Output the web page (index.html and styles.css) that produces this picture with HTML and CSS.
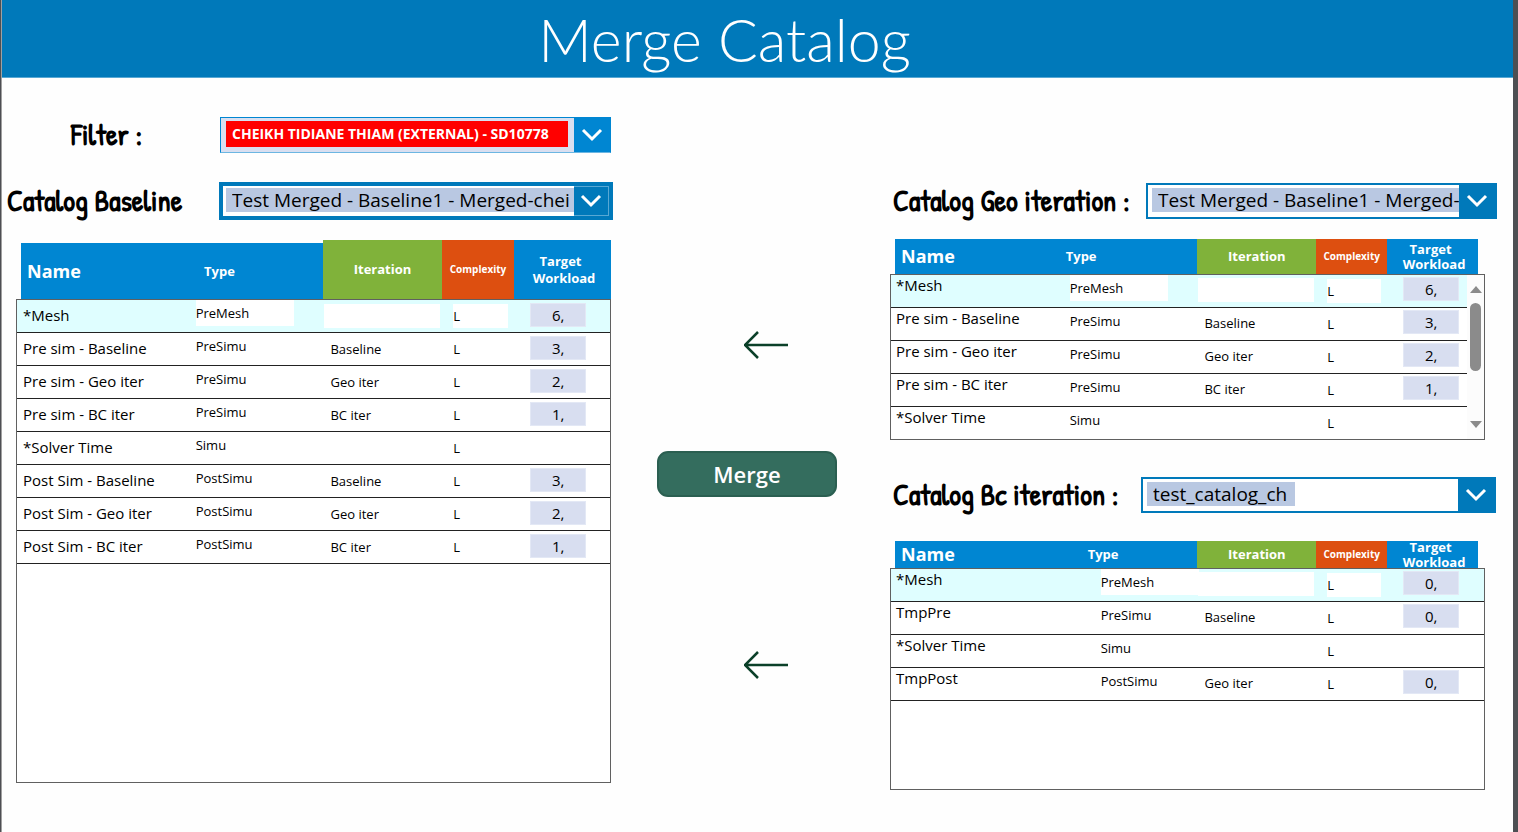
FILE: index.html
```html
<!DOCTYPE html>
<html lang="en">
<head>
<meta charset="utf-8">
<title>Merge Catalog</title>
<link rel="stylesheet" href="styles.css">
</head>
<body>
<div class="screen">
<header class="banner"><h1>Merge Catalog</h1></header>
<main class="content">
  <section class="base">
    <div class="field filter">
      <label for="filter">Filter :</label>
      <div class="combo combo-filter">
        <select id="filter"><option>CHEIKH TIDIANE THIAM (EXTERNAL) - SD10778</option></select>
        <span class="chevron"><svg width="22" height="14" viewBox="0 0 22 14"><path d="M2 2l9 9 9-9"/></svg></span>
      </div>
    </div>
    <div class="field baseline">
      <label for="baseline">Catalog Baseline</label>
      <div class="combo combo-focus">
        <select id="baseline"><option>Test Merged - Baseline1 - Merged-chei</option></select>
        <span class="chevron"><svg width="22" height="14" viewBox="0 0 22 14"><path d="M2 2l9 9 9-9"/></svg></span>
      </div>
    </div>
    <table class="catalog catalog-base">
      <thead><tr><th class="h-name">Name</th><th class="h-type">Type</th><th class="h-iter">Iteration</th><th class="h-cplx">Complexity</th><th class="h-load"><span>Target</span><span>Workload</span></th></tr></thead>
      <tbody>
        <tr class="selected"><td class="name">*Mesh</td><td class="type"><span>PreMesh</span></td><td class="iter"><span></span></td><td class="cplx"><span>L</span></td><td class="load"><input value="6," aria-label="Mesh workload"></td></tr>
        <tr><td class="name">Pre sim - Baseline</td><td class="type"><span>PreSimu</span></td><td class="iter"><span>Baseline</span></td><td class="cplx"><span>L</span></td><td class="load"><input value="3," aria-label="Pre sim Baseline workload"></td></tr>
        <tr><td class="name">Pre sim - Geo iter</td><td class="type"><span>PreSimu</span></td><td class="iter"><span>Geo iter</span></td><td class="cplx"><span>L</span></td><td class="load"><input value="2," aria-label="Pre sim Geo workload"></td></tr>
        <tr><td class="name">Pre sim - BC iter</td><td class="type"><span>PreSimu</span></td><td class="iter"><span>BC iter</span></td><td class="cplx"><span>L</span></td><td class="load"><input value="1," aria-label="Pre sim BC workload"></td></tr>
        <tr><td class="name">*Solver Time</td><td class="type"><span>Simu</span></td><td class="iter"><span></span></td><td class="cplx"><span>L</span></td><td class="load"></td></tr>
        <tr><td class="name">Post Sim - Baseline</td><td class="type"><span>PostSimu</span></td><td class="iter"><span>Baseline</span></td><td class="cplx"><span>L</span></td><td class="load"><input value="3," aria-label="Post Sim Baseline workload"></td></tr>
        <tr><td class="name">Post Sim - Geo iter</td><td class="type"><span>PostSimu</span></td><td class="iter"><span>Geo iter</span></td><td class="cplx"><span>L</span></td><td class="load"><input value="2," aria-label="Post Sim Geo workload"></td></tr>
        <tr><td class="name">Post Sim - BC iter</td><td class="type"><span>PostSimu</span></td><td class="iter"><span>BC iter</span></td><td class="cplx"><span>L</span></td><td class="load"><input value="1," aria-label="Post Sim BC workload"></td></tr>
      </tbody>
    </table>
  </section>

  <section class="actions">
    <svg class="arrow" width="44" height="28" viewBox="0 0 44 28"><path d="M44 14H2M14 1L1 14l13 13"/></svg>
    <button class="merge" type="button">Merge</button>
    <svg class="arrow" width="44" height="28" viewBox="0 0 44 28"><path d="M44 14H2M14 1L1 14l13 13"/></svg>
  </section>

  <section class="iterations">
    <div class="field geo">
      <label for="geo">Catalog Geo iteration :</label>
      <div class="combo">
        <select id="geo"><option>Test Merged - Baseline1 - Merged-chei</option></select>
        <span class="chevron"><svg width="22" height="14" viewBox="0 0 22 14"><path d="M2 2l9 9 9-9"/></svg></span>
      </div>
    </div>
    <div class="scroll-area">
      <table class="catalog catalog-geo">
        <thead><tr><th class="h-name">Name</th><th class="h-type">Type</th><th class="h-iter">Iteration</th><th class="h-cplx">Complexity</th><th class="h-load"><span>Target</span><span>Workload</span></th></tr></thead>
        <tbody>
          <tr class="selected"><td class="name">*Mesh</td><td class="type"><span>PreMesh</span></td><td class="iter"><span></span></td><td class="cplx"><span>L</span></td><td class="load"><input value="6," aria-label="Geo Mesh workload"></td></tr>
          <tr><td class="name">Pre sim - Baseline</td><td class="type"><span>PreSimu</span></td><td class="iter"><span>Baseline</span></td><td class="cplx"><span>L</span></td><td class="load"><input value="3," aria-label="Geo Baseline workload"></td></tr>
          <tr><td class="name">Pre sim - Geo iter</td><td class="type"><span>PreSimu</span></td><td class="iter"><span>Geo iter</span></td><td class="cplx"><span>L</span></td><td class="load"><input value="2," aria-label="Geo iter workload"></td></tr>
          <tr><td class="name">Pre sim - BC iter</td><td class="type"><span>PreSimu</span></td><td class="iter"><span>BC iter</span></td><td class="cplx"><span>L</span></td><td class="load"><input value="1," aria-label="Geo BC iter workload"></td></tr>
          <tr><td class="name">*Solver Time</td><td class="type"><span>Simu</span></td><td class="iter"><span></span></td><td class="cplx"><span>L</span></td><td class="load"></td></tr>
        </tbody>
      </table>
      <div class="scrollbar" aria-hidden="true">
        <svg width="12" height="7" viewBox="0 0 12 7"><path d="M0 7L6 0l6 7z"/></svg>
        <i class="thumb"></i>
        <svg width="12" height="7" viewBox="0 0 12 7"><path d="M0 0h12L6 7z"/></svg>
      </div>
    </div>
    <div class="field bc">
      <label for="bc">Catalog Bc iteration :</label>
      <div class="combo combo-short">
        <select id="bc"><option>test_catalog_ch</option></select>
        <span class="chevron"><svg width="22" height="14" viewBox="0 0 22 14"><path d="M2 2l9 9 9-9"/></svg></span>
      </div>
    </div>
    <table class="catalog catalog-bc">
      <thead><tr><th class="h-name">Name</th><th class="h-type">Type</th><th class="h-iter">Iteration</th><th class="h-cplx">Complexity</th><th class="h-load"><span>Target</span><span>Workload</span></th></tr></thead>
      <tbody>
        <tr class="selected"><td class="name">*Mesh</td><td class="type"><span>PreMesh</span></td><td class="iter"><span></span></td><td class="cplx"><span>L</span></td><td class="load"><input value="0," aria-label="Bc Mesh workload"></td></tr>
        <tr><td class="name">TmpPre</td><td class="type"><span>PreSimu</span></td><td class="iter"><span>Baseline</span></td><td class="cplx"><span>L</span></td><td class="load"><input value="0," aria-label="TmpPre workload"></td></tr>
        <tr><td class="name">*Solver Time</td><td class="type"><span>Simu</span></td><td class="iter"><span></span></td><td class="cplx"><span>L</span></td><td class="load"></td></tr>
        <tr><td class="name">TmpPost</td><td class="type"><span>PostSimu</span></td><td class="iter"><span>Geo iter</span></td><td class="cplx"><span>L</span></td><td class="load"><input value="0," aria-label="TmpPost workload"></td></tr>
      </tbody>
    </table>
  </section>
</main>
</div>
</body>
</html>
```
FILE: styles.css
```css
* { box-sizing: border-box; }
body {
  margin: 0;
  font-family: "Open Sans", sans-serif;
  color: #000;
  background: #4d4f53;
}
.screen {
  min-height: 100vh;
  margin: 0 5px 0 1px;
  border-left: 1px solid #a0a0a0;
  background: #fefefe;
}
.banner {
  height: 78px;
  background: #0079ba;
  border-bottom: 1px solid #58a8d4;
  text-align: center;
}
h1 {
  margin: 0;
  padding-right: 66px;
  font: 300 59px/80px Lato, sans-serif;
  color: #fff;
}
.content {
  display: grid;
  grid-template-columns: minmax(0, 609fr) minmax(0, 279fr) minmax(0, 623fr);
}

/* Fields */
.field { display: flex; align-items: center; }
.field label {
  flex: none;
  font: bold 29px/36px "Patrick Hand", "Liberation Sans Narrow", "Liberation Sans", sans-serif;
  white-space: nowrap;
}
.combo {
  flex: 1;
  min-width: 0;
  height: 36px;
  display: flex;
  align-items: center;
  border: 2px solid #0079ba;
  background: #fff;
}
.combo select {
  appearance: none;
  flex: 1;
  min-width: 0;
  height: 24px;
  margin: 0 0 2px 4px;
  padding: 0 0 0 6px;
  border: 0;
  border-radius: 0;
  background: #b9c8e2;
  color: #000;
  font: 19px/24px "Open Sans", sans-serif;
  text-overflow: clip;
}
.combo .chevron {
  flex: none;
  align-self: stretch;
  width: 36px;
  display: flex;
  align-items: center;
  justify-content: center;
  background: #0079ba;
}
.chevron path { fill: none; stroke: #fff; stroke-width: 3; }
.combo-filter { border: 1px solid #0086d2; border-bottom-color: #6cb6e2; background: #d9dff0; }
.combo-filter select {
  flex: none;
  width: 342px;
  height: 26px;
  margin: 0 0 3px 5px;
  padding-left: 6px;
  background: #f00;
  color: #fff;
  font: bold 14px/26px "Open Sans", sans-serif;
}
.combo-filter .chevron { margin-left: auto; background: #0086d2; }
.combo-focus { height: 38px; border: 4px solid #0079ba; }
.combo-focus .chevron { width: 35px; border: 1px solid #58a8d4; border-left: 0; }
.combo-focus select { margin-left: 3px; }
.combo-short select { flex: none; width: 148px; }
.combo-short .chevron { margin-left: auto; }

.base { padding-top: 39px; }
.filter label { width: 218px; padding-left: 69px; }
.baseline { margin-top: 29px; margin-right: -2px; }
.baseline label { width: 217px; padding-left: 5px; }
.geo { padding-top: 105px; margin-right: 16px; }
.geo label { width: 256px; padding-left: 3px; }
.bc { margin-top: 37px; margin-right: 17px; }
.bc label { width: 251px; padding-left: 3px; }

/* Tables */
.catalog, .catalog thead, .catalog tbody { display: block; }
.catalog tr { display: grid; }
.catalog th, .catalog td { padding: 0; min-width: 0; }
.catalog th {
  display: flex;
  flex-direction: column;
  justify-content: center;
  align-items: center;
  background: #0086d2;
  color: #fff;
  font-weight: bold;
  font-size: 13px;
  line-height: 17px;
}
.catalog .h-name { align-items: flex-start; padding-left: 6px; font-size: 18px; }
.catalog .h-type { align-items: flex-start; }
.catalog .h-iter { background: #80b23a; }
.catalog .h-cplx { background: #dd4f10; font-size: 10px; }
.catalog .h-load { padding-right: 4px; }
.catalog .h-load span:last-child { padding-left: 7px; }
.catalog tbody { border: 1px solid #606060; background: #fff; }
.catalog tbody tr { height: 33px; border-bottom: 1px solid #222; }
.catalog .selected { background: #dffeff; }
.catalog .name { padding: 5px 0 0 6px; font-size: 15px; line-height: 20px; }
.catalog td span { display: block; height: 24px; font-size: 13px; line-height: 24px; background: #fff; }
.catalog .type span { width: 98px; height: 26px; line-height: 26px; }
.catalog .iter { padding: 4px 2px 0 1px; }
.catalog .iter span { padding-left: 6px; }
.catalog .cplx { padding: 4px 6px 0 11px; }
.catalog .load { padding: 3px 0 0 16px; }
.catalog .load input {
  width: 56px;
  height: 24px;
  padding: 0;
  border: 1px solid #e3e8f5;
  background: #d8def0;
  color: #000;
  font: 15px/20px "Open Sans", sans-serif;
  text-align: center;
}

.catalog-base { margin-top: 20px; margin-left: 14px; }
.catalog-base thead { padding-left: 5px; }
.catalog-base thead tr { height: 59px; grid-template-columns: 174fr 128fr 119fr 72fr 97fr; }
.catalog-base tbody { height: 484px; }
.catalog-base tbody tr { grid-template-columns: 179fr 128fr 119fr 72fr 96fr; }
.catalog-base .h-name, .catalog-base .h-type { margin-top: 3px; }
.catalog-base .h-type { padding-left: 9px; }

.scroll-area { position: relative; margin-top: 20px; }
.catalog-geo, .catalog-bc { margin-right: 28px; }
.catalog-geo thead, .catalog-bc thead { padding: 0 7px 0 5px; }
.catalog-geo thead tr { height: 35px; grid-template-columns: 171fr 132fr 119fr 71fr 91fr; }
.catalog-geo th, .catalog-bc th { line-height: 15px; }
.catalog-geo tbody { height: 166px; overflow: hidden; }
.catalog-geo tbody tr { grid-template-columns: 179fr 128fr 119fr 71fr 97fr; }
.catalog-geo .name, .catalog-bc .name { padding: 0 0 0 5px; }
.catalog-geo .iter, .catalog-bc .iter { padding-top: 3px; }
.catalog-geo .load, .catalog-bc .load { padding-top: 2px; }
.scrollbar {
  position: absolute;
  right: 29px;
  bottom: 1px;
  width: 17px;
  height: 164px;
  display: flex;
  flex-direction: column;
  align-items: center;
  padding: 11px 0;
  background: #fcfcfc;
}
.scrollbar path { fill: #8b8b8b; }
.thumb { width: 11px; height: 68px; margin: 10px 0 auto; border-radius: 6px; background: #8b8b8b; }

.catalog-bc { margin-top: 28px; }
.catalog-bc thead tr { height: 27px; grid-template-rows: 27px; grid-template-columns: 193fr 110fr 119fr 71fr 91fr; }
.catalog-bc tbody { height: 222px; }
.catalog-bc tbody tr { grid-template-columns: 210fr 97fr 119fr 71fr 97fr; }

/* Centre actions */
.actions { display: flex; flex-direction: column; align-items: center; padding: 253px 7px 0 0; }
.arrow { margin-left: 38px; }
.arrow path { fill: none; stroke: #0b4029; stroke-width: 2.5; }
.merge {
  width: 180px;
  height: 46px;
  margin: 92px 0 154px;
  border: 2px solid #2b5f51;
  border-radius: 11px;
  background: #346d5e;
  color: #fff;
  font: 600 22px/30px "Open Sans", sans-serif;
}
```
